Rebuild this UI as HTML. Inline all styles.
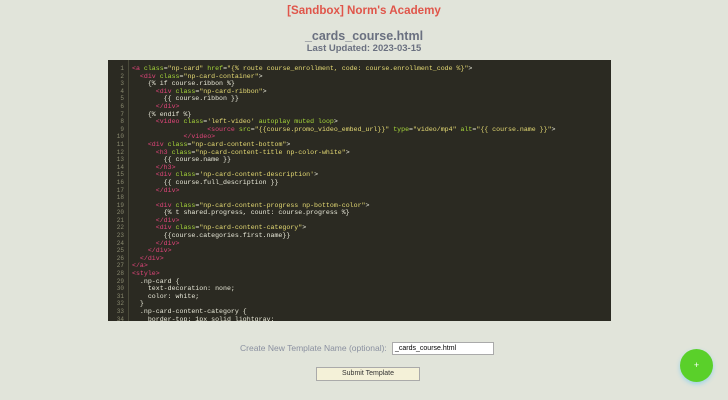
<!DOCTYPE html>
<html><head><meta charset="utf-8"><style>
body{margin:0;width:728px;height:400px;background:#e1e4da;font-family:"Liberation Sans",sans-serif;position:relative;overflow:hidden}
.t1{position:absolute;top:4px;left:0;width:728px;text-align:center;color:#e0554a;font-size:11.6px;font-weight:bold}
.t2{position:absolute;top:29px;left:0;width:728px;text-align:center;color:#6a7080;font-size:12.5px;font-weight:bold}
.t3{position:absolute;top:43px;left:0;width:728px;text-align:center;color:#6a7080;font-size:9.5px;font-weight:bold}
.code{position:absolute;left:108px;top:60px;width:503px;height:261px;background:#2b2a22;overflow:hidden}
.ln{position:absolute;left:0;top:5px;width:16px;text-align:right;font:6px/7.6px "Liberation Mono",monospace;color:#8a8a70;white-space:pre}
.sep{position:absolute;left:20px;top:0;bottom:0;border-left:1px solid #4a4a3a}
pre{position:absolute;left:24px;top:5px;margin:0;font:6.6px/7.6px "Liberation Mono",monospace;color:#e8e8d8}
.k{color:#e0457a}.a{color:#a6d63a}.s{color:#e6db74}
.lab{position:absolute;left:240px;top:343px;font-size:8.5px;color:#8a90a0}
.inp{position:absolute;left:392px;top:342px;background:#fff;border:1px solid #aaa;font-size:7px;line-height:11px;padding-left:2px;box-sizing:border-box;width:102px;height:13px}
.btn{position:absolute;left:316px;top:367px;width:102px;height:12px;background:#f4f1d8;border:1px solid #aaa;font-size:7px;text-align:center;line-height:12px;color:#333}
.fab{position:absolute;left:680px;top:349px;width:33px;height:33px;border-radius:50%;background:#5ad02a;box-shadow:0 2px 5px #9cd4e8;color:#fff;text-align:center;line-height:33px;font-size:9px}
</style></head><body>
<div class="t1">[Sandbox] Norm's Academy</div>
<div class="t2">_cards_course.html</div>
<div class="t3">Last Updated: 2023-03-15</div>
<div class="code">
<div class="ln">1
2
3
4
5
6
7
8
9
10
11
12
13
14
15
16
17
18
19
20
21
22
23
24
25
26
27
28
29
30
31
32
33
34</div>
<div class="sep"></div>
<pre><span class="k">&lt;a</span> <span class="a">class</span>=<span class="s">"np-card"</span> <span class="a">href</span>=<span class="s">"{% route course_enrollment, code: course.enrollment_code %}"</span>&gt;
  <span class="k">&lt;div</span> <span class="a">class</span>=<span class="s">"np-card-container"</span>&gt;
    {% if course.ribbon %}
      <span class="k">&lt;div</span> <span class="a">class</span>=<span class="s">"np-card-ribbon"</span>&gt;
        {{ course.ribbon }}
      <span class="k">&lt;/div&gt;</span>
    {% endif %}
      <span class="k">&lt;video</span> <span class="a">class</span>=<span class="s">'left-video'</span> <span class="a">autoplay muted loop</span>&gt;
                   <span class="k">&lt;source</span> <span class="a">src</span>=<span class="s">"{{course.promo_video_embed_url}}"</span> <span class="a">type</span>=<span class="s">"video/mp4"</span> <span class="a">alt</span>=<span class="s">"{{ course.name }}"</span>&gt;
             <span class="k">&lt;/video&gt;</span>
    <span class="k">&lt;div</span> <span class="a">class</span>=<span class="s">"np-card-content-bottom"</span>&gt;
      <span class="k">&lt;h3</span> <span class="a">class</span>=<span class="s">"np-card-content-title np-color-white"</span>&gt;
        {{ course.name }}
      <span class="k">&lt;/h3&gt;</span>
      <span class="k">&lt;div</span> <span class="a">class</span>=<span class="s">'np-card-content-description'</span>&gt;
        {{ course.full_description }}
      <span class="k">&lt;/div&gt;</span>

      <span class="k">&lt;div</span> <span class="a">class</span>=<span class="s">"np-card-content-progress np-bottom-color"</span>&gt;
        {% t shared.progress, count: course.progress %}
      <span class="k">&lt;/div&gt;</span>
      <span class="k">&lt;div</span> <span class="a">class</span>=<span class="s">"np-card-content-category"</span>&gt;
        {{course.categories.first.name}}
      <span class="k">&lt;/div&gt;</span>
    <span class="k">&lt;/div&gt;</span>
  <span class="k">&lt;/div&gt;</span>
<span class="k">&lt;/a&gt;</span>
<span class="k">&lt;style&gt;</span>
  .np-card {
    text-decoration: none;
    color: white;
  }
  .np-card-content-category {
    border-top: 1px solid lightgray;</pre>
</div>
<div class="lab">Create New Template Name (optional):</div>
<div class="inp">_cards_course.html</div>
<div class="btn">Submit Template</div>
<div class="fab">+</div>
</body></html>
